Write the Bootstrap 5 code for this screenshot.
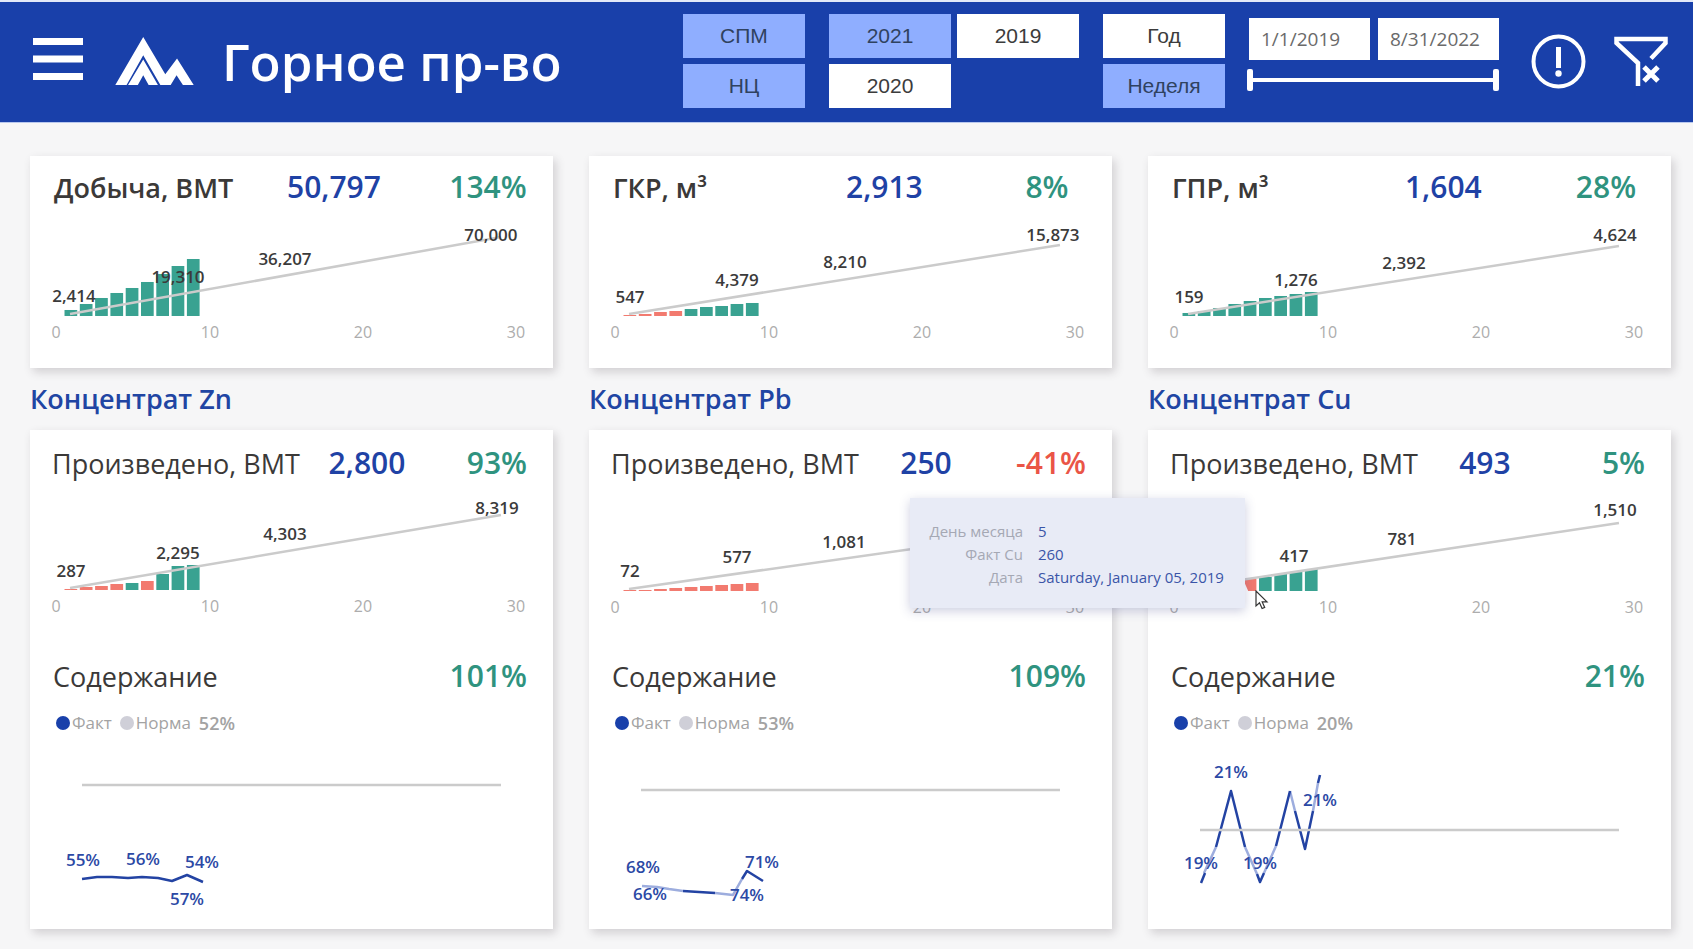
<!DOCTYPE html>
<html lang="ru">
<head>
<meta charset="utf-8">
<meta name="viewport" content="width=device-width, initial-scale=1">
<title>Горное пр-во</title>
<link href="https://cdn.jsdelivr.net/npm/bootstrap@5.3.0/dist/css/bootstrap.min.css" rel="stylesheet">
<style>
  :root { --brand: #1940aa; --ink: #3b3938; --up: #2f937f; --down: #ea5546; }
  body { background: #f6f6f7; color: var(--ink); font-family: "Open Sans", "Noto Sans", sans-serif; }
  .topbar { background: var(--brand); border-top: 2px solid #e3e9f8; border-bottom: 1px solid #b9c8ee; padding: 0 25px 2px 33px; height: 123px; }
  .icon-btn { background: none; border: 0; padding: 0; line-height: 0; color: #fff; }
  .page-title { font-size: 51px; font-weight: 600; line-height: 60px; }
  .slicers { gap: 24px; }
  .slicer { display: grid; gap: 6px; grid-auto-columns: 122px; grid-template-rows: 44px 44px; }
  .slicer.two { grid-template-columns: 122px 122px; }
  .slicer .btn { border: 0; border-radius: 0; background: #fff; color: #3c3c3c; font: 21px "Liberation Sans", sans-serif; padding: 0; }
  .slicer .btn.active { background: #8faeff; color: #2f4260; }
  .dates { width: 250px; }
  .dates .form-control { height: 42px; border: 0; border-radius: 0; padding: 0 12px; font-size: 19px; color: #6a6a6a; }
  .span-slider { height: 22px; margin: 9px 0 0 -2px; position: relative; }
  .span-slider::before { content: ""; position: absolute; left: 0; right: 0; top: 9px; height: 4px; background: #fff; }
  .span-slider input { -webkit-appearance: none; appearance: none; position: absolute; inset: 0; width: 100%; height: 22px; margin: 0; background: none; pointer-events: none; }
  .span-slider input::-webkit-slider-thumb { -webkit-appearance: none; width: 6px; height: 22px; border-radius: 2px; background: #fff; pointer-events: auto; }
  .board { padding: 33px 22px 20px 30px; }
  .board .row { --bs-gutter-x: 36px; }
  .tile { background: #fff; box-shadow: 3px 4px 9px rgba(60, 50, 60, .2); position: relative; }
  .tile-head { display: grid; align-items: baseline; white-space: nowrap; overflow: hidden; }
  .tile-head h2 { margin: 0; font-size: 27px; line-height: inherit; font-weight: 400; }
  .tile-head.kpi { grid-template-columns: 233px 1fr 90px; height: 60px; padding: 4px 20px 0 24px; line-height: 54px; }
  .tile-head.kpi h2 { font-weight: 600; }
  .tile-head.kpi .pct { text-align: center; }
  .tile-head.made { grid-template-columns: 1fr 100px 110px; height: 66px; padding: 2px 26px 0 22px; line-height: 62px; }
  .tile-head.made .val { text-align: center; }
  .tile-head.grade { grid-template-columns: 1fr auto; height: 70px; padding: 4px 26px 0 23px; line-height: 64px; }
  .pct { text-align: right; }
  .val, .pct { font-size: 30px; font-weight: 600; }
  .val { color: #1f42a5; }
  .pct { color: var(--up); }
  .pct.neg { color: var(--down); }
  .metal { height: 62px; line-height: 62px; margin: 0; font-size: 27px; font-weight: 600; color: #2145a3; }
  .key { padding-left: 26px; font-size: 17px; line-height: 26px; color: #a3a3a3; }
  .key i { width: 14px; height: 14px; border-radius: 50%; background: #cfcfd8; margin-right: 2px; }
  .key i.fact { background: var(--brand); }
  .key b { font-weight: 600; font-size: 18px; }
  .plot { display: block; width: 100%; height: auto; overflow: visible; }
  .plot text { text-anchor: middle; font-size: 17px; font-weight: 600; fill: #3b3b3b; }
  .plot .tick { font-size: 16px; font-weight: 400; fill: #adadad; }
  .plot .share { fill: #2c49a5; }
  .plot path { fill: none; }
  .norm { stroke: #cbcbcb; stroke-width: 2.500; }
  .trace { stroke: #2343a3; stroke-width: 2.500; stroke-linejoin: round; }
  .trace.pale { stroke: #9dadde; }
  .plot-box { position: relative; }
  .hint { position: absolute; z-index: 3; left: -238px; top: 2px; width: 335px; height: 110px; background: #e8ebf6; box-shadow: 0 3px 10px rgba(50, 60, 130, .25); font-size: 15px; line-height: 23px; padding: 22px 0 0; }
  .hint dl { display: grid; grid-template-columns: 113px 1fr; column-gap: 15px; margin: 0; white-space: nowrap; }
  .hint dt { font-weight: 400; text-align: right; color: #a5a8b4; }
  .hint dd { margin: 0; color: #3a55a8; }
  .pointer { position: absolute; z-index: 4; left: 107px; top: 94px; }
</style>
</head>
<body>
<header class="topbar d-flex align-items-center">
  <button class="icon-btn mb-1" type="button" aria-label="Меню">
    <svg width="50" height="42" viewBox="0 0 50 42" fill="currentColor"><path d="M0 0h50v7H0zM0 17.500h50v7H0zM0 35h50v7H0z"/></svg>
  </button>
  <svg class="ms-4 ps-2 flex-shrink-0" width="87" height="49" viewBox="0 0 80 50" fill="#fff" aria-hidden="true">
    <path d="M0 49 28.500 0 51 38 63 22 80 49H69L62.500 39 56.500 49H46L28.500 18.500 11.500 49z"/>
    <path d="M13 49 28.500 23 43.500 49H34L28.500 39 23 49z"/>
  </svg>
  <h1 class="page-title text-white text-nowrap mb-0 ms-4 ps-1 flex-grow-1">Горное пр-во</h1>
  <div class="slicers d-flex flex-shrink-0">
    <div class="slicer">
      <button type="button" class="btn active" aria-pressed="true">СПМ</button>
      <button type="button" class="btn active" aria-pressed="true">НЦ</button>
    </div>
    <div class="slicer two">
      <button type="button" class="btn active" aria-pressed="true">2021</button>
      <button type="button" class="btn">2019</button>
      <button type="button" class="btn">2020</button>
    </div>
    <div class="slicer">
      <button type="button" class="btn">Год</button>
      <button type="button" class="btn active" aria-pressed="true">Неделя</button>
    </div>
    <div class="dates pt-1">
      <div class="d-flex gap-2">
        <input class="form-control" type="text" value="1/1/2019" aria-label="Начало периода">
        <input class="form-control" type="text" value="8/31/2022" aria-label="Конец периода">
      </div>
      <div class="span-slider">
        <input type="range" value="0" aria-label="Начало диапазона">
        <input type="range" value="100" aria-label="Конец диапазона">
      </div>
    </div>
  </div>
  <button class="icon-btn ms-4 ps-2" type="button" aria-label="Сведения">
    <svg width="55" height="55" viewBox="0 0 55 55" fill="none" stroke="currentColor" stroke-width="4"><circle cx="27.500" cy="27.500" r="25"/><path d="M27.500 13v21" stroke-width="5"/><circle cx="27.500" cy="39.500" r="3.200" fill="currentColor" stroke="none"/></svg>
  </button>
  <button class="icon-btn ms-4 ps-1" type="button" aria-label="Сбросить фильтры">
    <svg width="54" height="50" viewBox="0 0 54 50" fill="none" stroke="currentColor" stroke-width="4.500"><path d="M24 50V27L2.500 7V3h49v4L37 22.500"/><path d="m30 31 14 14M44 31 30 45" stroke-width="5"/></svg>
  </button>
</header>

<main class="board">
  <div class="row">
    <div class="col-4">
      <section class="tile">
        <div class="tile-head kpi"><h2>Добыча, ВМТ</h2><span class="val">50,797</span><span class="pct">134%</span></div>
        <svg class="plot" viewBox="0 0 523 152" data-plot="mining"></svg>
      </section>
      <h2 class="metal">Концентрат Zn</h2>
      <section class="tile">
        <div class="tile-head made"><h2>Произведено, ВМТ</h2><span class="val">2,800</span><span class="pct">93%</span></div>
        <svg class="plot" viewBox="0 0 523 144" data-plot="zn"></svg>
        <div class="tile-head grade"><h2>Содержание</h2><span class="pct">101%</span></div>
        <div class="key d-flex align-items-center"><i class="fact"></i>Факт<i class="ms-2"></i>Норма<b class="ms-2">52%</b></div>
        <svg class="plot" viewBox="0 0 523 193" data-plot="znGrade"></svg>
      </section>
    </div>
    <div class="col-4">
      <section class="tile">
        <div class="tile-head kpi"><h2>ГКР, м³</h2><span class="val">2,913</span><span class="pct">8%</span></div>
        <svg class="plot" viewBox="0 0 523 152" data-plot="gkr"></svg>
      </section>
      <h2 class="metal">Концентрат Pb</h2>
      <section class="tile">
        <div class="tile-head made"><h2>Произведено, ВМТ</h2><span class="val">250</span><span class="pct neg">-41%</span></div>
        <svg class="plot" viewBox="0 0 523 144" data-plot="pb"></svg>
        <div class="tile-head grade"><h2>Содержание</h2><span class="pct">109%</span></div>
        <div class="key d-flex align-items-center"><i class="fact"></i>Факт<i class="ms-2"></i>Норма<b class="ms-2">53%</b></div>
        <svg class="plot" viewBox="0 0 523 193" data-plot="pbGrade"></svg>
      </section>
    </div>
    <div class="col-4">
      <section class="tile">
        <div class="tile-head kpi"><h2>ГПР, м³</h2><span class="val">1,604</span><span class="pct">28%</span></div>
        <svg class="plot" viewBox="0 0 523 152" data-plot="gpr"></svg>
      </section>
      <h2 class="metal">Концентрат Cu</h2>
      <section class="tile">
        <div class="tile-head made"><h2>Произведено, ВМТ</h2><span class="val">493</span><span class="pct">5%</span></div>
        <div class="plot-box">
          <svg class="plot" viewBox="0 0 523 144" data-plot="cu"></svg>
          <div class="hint" role="tooltip">
            <dl><dt>День месяца</dt><dd>5</dd><dt>Факт Cu</dt><dd>260</dd><dt>Дата</dt><dd>Saturday, January 05, 2019</dd></dl>
          </div>
          <svg class="pointer" width="14" height="20" viewBox="0 0 14 20" aria-hidden="true"><path d="M1 1v15l3.500-3.200 2.600 5.700 2.600-1.100-2.500-5.500H12z" fill="#fff" stroke="#333" stroke-width="1.200"/></svg>
        </div>
        <div class="tile-head grade"><h2>Содержание</h2><span class="pct">21%</span></div>
        <div class="key d-flex align-items-center"><i class="fact"></i>Факт<i class="ms-2"></i>Норма<b class="ms-2">20%</b></div>
        <svg class="plot" viewBox="0 0 523 193" data-plot="cuGrade"></svg>
      </section>
    </div>
  </div>
</main>

<script src="https://cdn.jsdelivr.net/npm/bootstrap@5.3.0/dist/js/bootstrap.bundle.min.js"></script>
<script>
  // Cumulative charts: bar heights by day (negative = behind plan), plan line, labels as [text, x, y].
  const cumulative = {
    mining: { base: 100, bars: [6, 12, 18, 23, 28, 34, 42, 50, 57], plan: [98, 21], labels: [['2,414', 44, 87], ['19,310', 148, 68], ['36,207', 255, 50], ['70,000', 461, 26]] },
    gkr: { base: 100, bars: [-1, -2, -4, -5, 7, 9, 10, 12, 13], plan: [98, 29], labels: [['547', 41, 88], ['4,379', 148, 71], ['8,210', 256, 53], ['15,873', 464, 26]] },
    gpr: { base: 100, bars: [3, 5, 8, 12, 15, 18, 20, 22, 24], plan: [98, 30], labels: [['159', 41, 88], ['1,276', 148, 71], ['2,392', 256, 54], ['4,624', 467, 26]] },
    zn: { base: 94, bars: [-1, -3, -4, -6, 7, -9, 16, 24, 25], plan: [92, 19], labels: [['287', 41, 82], ['2,295', 148, 64], ['4,303', 255, 45], ['8,319', 467, 19]] },
    pb: { base: 95, bars: [-1, -1, -2, -3, -4, -5, -6, -7, -8], plan: [93, 32], labels: [['72', 41, 82], ['577', 148, 68], ['1,081', 255, 53]] },
    cu: { base: 95, bars: [2, -4, -6, -8, -12, 14, 17, 19, 22], plan: [92, 27], labels: [['417', 146, 67], ['781', 254, 50], ['1,510', 467, 21]], corner: 'M95 83l6 14h-6z' }
  };
  // Grade charts: norm level, traces, labels.
  const grade = {
    znGrade: { norm: 49, pale: '', dark: 'M52 143L67 141 82 141 98 142 112 141 128 142 142 145 157 139 173 146', labels: [['55%', 53, 130], ['56%', 113, 129], ['54%', 172, 132], ['57%', 157, 169]] },
    pbGrade: { norm: 54, pale: 'M53 150L68 151 80 153 94 155M126 157L144 159 153 143', dark: 'M94 155L110 156 126 157M153 143L158 135 174 145', labels: [['68%', 54, 137], ['66%', 61, 164], ['74%', 158, 165], ['71%', 173, 132]] },
    cuGrade: { norm: 94, pale: 'M56 137L68 111M97 111L109 138M116 137L128 110M142 55L147 75M165 75L170 47', dark: 'M53 147L57 137M68 111L83 55 97 111M109 138L112 146 116 137M128 110L142 55M147 75L157 113 165 75M170 47L172 39', labels: [['21%', 83, 42], ['19%', 53, 133], ['19%', 112, 133], ['21%', 172, 70]] }
  };
  const text = (cls, dy) => ([t, x, y]) => `<text class="${cls}" x="${x}" y="${y + dy}">${t}</text>`;

  for (const [id, c] of Object.entries(cumulative)) {
    const bars = c.bars.map((h, i) =>
      `<rect x="${34.5 + i * 15.3}" y="${c.base - Math.abs(h)}" width="12.700" height="${Math.abs(h)}" fill="${h < 0 ? '#f27a6f' : '#39a291'}"/>`).join('');
    const ticks = [['0', 26], ['10', 180], ['20', 333], ['30', 486]].map(([t, x]) => text('tick', 6)([t, x, c.base + 16])).join('');
    document.querySelector(`[data-plot="${id}"]`).innerHTML = bars +
      (c.corner ? `<path d="${c.corner}" style="fill:#fff"/>` : '') +
      `<path class="norm" d="M40 ${c.plan[0]}L471 ${c.plan[1]}"/>` + ticks + c.labels.map(text('', -1)).join('');
  }
  for (const [id, g] of Object.entries(grade)) {
    document.querySelector(`[data-plot="${id}"]`).innerHTML =
      `<path class="trace pale" d="${g.pale}"/><path class="trace" d="${g.dark}"/><path class="norm" d="M52 ${g.norm}H471"/>` +
      g.labels.map(text('share', 0)).join('');
  }
</script>
</body>
</html>
